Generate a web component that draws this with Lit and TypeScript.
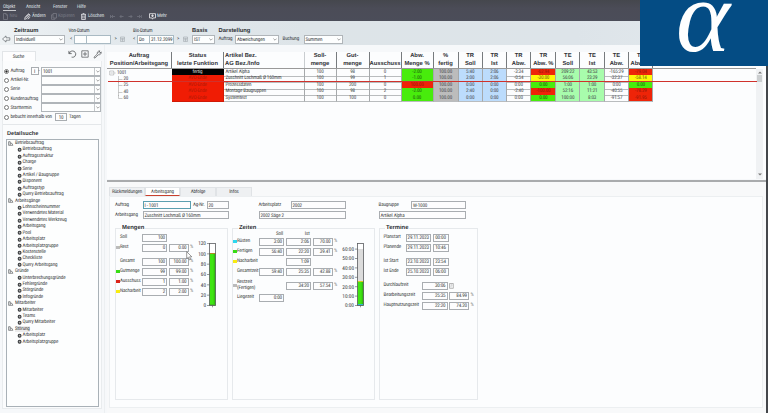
import { LitElement, html, svg, css, nothing } from "lit";
import { customElement, property } from "lit/decorators.js";
import { classMap } from "lit/directives/class-map.js";

const base = css`
  * { box-sizing: border-box; }
  .field {
    display: flex; align-items: center; height: 8px; flex: none;
    border: 1px solid #a9adb1; background: #fdfdfe; padding: 1px 1px 0;
    overflow: hidden; white-space: nowrap;
  }
  .field.num { justify-content: flex-end; }
  .field.mid { justify-content: center; }
  .field.focus { border-color: #5b9fb0; }
  b, h2, h3 { font-family: "Liberation Sans", Arial, sans-serif; font-stretch: normal; }
  svg { display: block; flex: none; }
`;

@customElement("combo-box")
class ComboBox extends LitElement {
  @property() value = "";
  static styles = [base, css`
    :host { display: flex; height: 9px; border: 1px solid #b0b5b9; background: #fdfefe; box-sizing: border-box; align-items: center; overflow: hidden; white-space: nowrap; }
    .text { flex: 1; padding: 1px 0 0 1px; }
    .arrow { width: 6px; height: 7px; display: flex; align-items: center; justify-content: center; }
    :host([boxed]) .arrow { border-left: 1px solid #c4c8cb; }
  `];
  render() {
    return html`<span class="text">${this.value}</span>
      <span class="arrow"><svg width="4" height="3" viewBox="0 0 4 3"><path d="M.4 .6 2 2.2 3.6 .6" fill="none" stroke="#666" stroke-width=".6"/></svg></span>`;
  }
}

@customElement("app-header")
class AppHeader extends LitElement {
  static styles = [base, css`
    :host { display: block; height: 21px; background: linear-gradient(#45474d, #4b4c57 40%, #4b4d59); color: #dfe0e3; }
    .menu { display: grid; grid-template-columns: 23px 27px 24px 20px; padding: 4px 0 0 3px; height: 12px; line-height: 6px; }
    .active { border-bottom: 1px solid #c9cacd; width: 13px; height: 7px; }
    .tools { display: grid; grid-template-columns: 6.5px 14.5px 8px 19px 7px 23px 7px 22px 9px 9px 9px 12px 8px 14px; padding-left: 3px; align-items: center; height: 8px; line-height: 8px; }
    .dim { color: #777983; }
  `];
  render() {
    const nav = (d: string) => svg`<path d=${d} fill="none" stroke="#71737d" stroke-width=".8"/>`;
    return html`
      <div class="menu"><span class="active">Objekt</span><span>Ansicht</span><span>Fenster</span><span>Hilfe</span></div>
      <div class="tools">
        <svg width="5" height="7" viewBox="0 0 5 7"><path d="M.5 .5h2.5l1.5 1.5v4.5h-4z M3 .5v1.5h1.5" fill="none" stroke="#777983" stroke-width=".8"/></svg><span class="dim">Neu</span>
        <svg width="7" height="7" viewBox="0 0 7 7"><path d="M.6 6.4 1.2 4 4.6 .8 6.2 2.2 2.8 5.6zM1.6 4 4.9 1.2M2.5 5 5.6 2M3.8 6.2 6.3 4" fill="none" stroke="#e4e5e8" stroke-width=".8"/></svg><span>Ändern</span>
        <svg width="6" height="7" viewBox="0 0 6 7"><path d="M2 .5h3.5v4.5H2zM2 1.8H.5v4.5H4V5" fill="none" stroke="#777983" stroke-width=".8"/></svg><span class="dim">Kopieren</span>
        <svg width="5" height="7" viewBox="0 0 5 7"><path d="M0 1.4h5M1.6 .5h1.8M.6 1.5v5h3.8v-5M1.8 2.5v3M3.2 2.5v3" fill="none" stroke="#e4e5e8" stroke-width=".8"/></svg><span>Löschen</span>
        <svg width="5" height="5" viewBox="0 0 5 5">${nav("M.5 1v3M5 2.5H1.5M3 1 1.5 2.5 3 4")}</svg>
        <svg width="5" height="5" viewBox="0 0 5 5">${nav("M4.5 2.5H1M2.4 1 1 2.5 2.4 4")}</svg>
        <svg width="5" height="5" viewBox="0 0 5 5">${nav("M.5 2.5H4M2.6 1 4 2.5 2.6 4")}</svg>
        <svg width="5" height="5" viewBox="0 0 5 5">${nav("M4.6 1v3M0 2.5h3.6M2 1 3.6 2.5 2 4")}</svg>
        <svg width="7" height="7" viewBox="0 0 7 7"><path d="M.5 .7h6v4.2H4.2L3.5 6.2 2.8 4.9H.5zM2 2.8h3M3.5 1.4v2.8" fill="none" stroke="#f0f0f2" stroke-width=".8"/></svg><span>Mehr</span>
      </div>`;
  }
}

@customElement("filter-bar")
class FilterBar extends LitElement {
  static styles = [base, css`
    :host { display: block; height: 24px; background: linear-gradient(90deg, #eef2f4 0, #e3e9ed 12%, #dde4e8 40%, #dde4e9 75%, #e4eaee); color: #33373b; }
    .heads, .inputs { display: grid; align-items: center; }
    .heads { grid-template-columns: 54.5px 64.5px 59px 26.5px 60px; padding: 6px 0 0 14px; height: 13.5px; line-height: 8px; }
    .heads b { font-size: 5.8px; letter-spacing: 0; color: #2b2e31; }
    .inputs { grid-template-columns: 14px 51px 5px 4px 37px 3.5px 5.5px 13px 4px 37px 3px 5.5px 9.5px 22.5px 4px 16.5px 43.5px 4px 21px 39px; height: 9px; }
    .date { display: grid; grid-template-columns: 11px 1fr; height: 9px; border: 1px solid #a9bac3; background: #fdfefe; line-height: 8px; }
    .date span { padding-left: 1px; }
    .date span + span { border-left: 1px solid #a9bac3; }
    .back { margin-left: 2px; }
  `];
  render() {
    const cal = html`<svg width="5" height="6" viewBox="0 0 5 6"><path d="M.5 1h4v4.5h-4zM.5 2.4h4M1 3.8h3M2.5 2.4v3" fill="none" stroke="#a3a9ae" stroke-width=".6"/></svg>`;
    const date = (a: string, b: string) => html`
      <span>&lt;</span><span class="date"><span>${a}</span><span>${b}</span></span><i></i><span>&gt;</span>${cal}`;
    return html`
      <div class="heads"><b>Zeitraum</b><span>Von-Datum</span><span>Bis-Datum</span><b>Basis</b><b>Darstellung</b></div>
      <div class="inputs">
        <svg class="back" width="9" height="8" viewBox="2 0 9 8"><path d="M2.5 4 6 .9v1.9h3.8v2.4H6v1.9z" fill="#f4f6f7" stroke="#62676b" stroke-width=".7"/></svg>
        <combo-box value="Individuell"></combo-box><i></i>
        ${date("", "")}
        ${date("Do", "31.12.2099")}
        <combo-box value="IST"></combo-box><i></i>
        <span>Auftrag</span><combo-box value="Abweichungen"></combo-box><i></i>
        <span>Buchung</span><combo-box value="Summen"></combo-box>
      </div>`;
  }
}

const tree: [string, string[]][] = [
  ["Betriebsauftrag", ["Betriebsauftrag", "Auftragsstruktur", "Charge", "Serie", "Artikel / Baugruppe", "Disponent", "Auftragstyp", "Query Betriebsauftrag"]],
  ["Arbeitsgänge", ["Lohnscheinnummer", "Verwendetes Material", "Verwendetes Werkzeug", "Arbeitsgang", "Pool", "Arbeitsplatz", "Arbeitsplatzgruppe", "Kostenstelle", "Checkliste", "Query Arbeitsgang"]],
  ["Gründe", ["Unterbrechungsgründe", "Fehlergründe", "Störgründe", "Infogründe"]],
  ["Mitarbeiter", ["Mitarbeiter", "Teams", "Query Mitarbeiter"]],
  ["Störung", ["Arbeitsplatz", "Arbeitsplatzgruppe"]],
];

@customElement("search-panel")
class SearchPanel extends LitElement {
  static styles = [base, css`
    :host { display: flex; flex-direction: column; width: 105px; flex: none; background: #f6f8fa; padding: 5px 2px 4px; border-right: 1px solid #eceff1; }
    .top { display: flex; height: 11px; }
    .tab { width: 34px; background: #fdfdfe; border: 1px solid #e2e5e8; border-bottom: none; display: flex; justify-content: center; align-items: center; margin-top: 1px; padding-right: 1px; }
    .icons { display: flex; gap: 4px; margin-left: 32px; }
    .body { flex: 1; background: #fbfcfd; border: 1px solid #e9ecee; border-top: none; display: flex; flex-direction: column; }
    .form { padding: 5.5px 1px 0; height: 64px; border-bottom: 1px solid #e4e7ea; }
    .row { display: grid; grid-template-columns: 6.5px 20px 8px 2.5px 60px; height: 9.2px; align-items: center; white-space: nowrap; }
    .row.plain { grid-template-columns: 6.5px 30.5px 60px; }
    .row.days { grid-template-columns: 6.5px 44.5px 12px 40px; }
    .row combo-box { height: 9px; }
    .radio { width: 5px; height: 5px; border: .7px solid #777; border-radius: 50%; display: flex; background: #fff; }
    .radio.on { background: radial-gradient(#222 42%, #fff 55%); }
    h2 { margin: 6px 0 0 4px; font-size: 5.6px; line-height: 7px; letter-spacing: 0; color: #303336; }
    .list { margin: 1px 2px 1px 3px; flex: 1; border: 1px solid #a9b1b7; background: #fdfefe; padding-left: 1px; }
    .node { height: 6.41px; display: grid; align-items: center; grid-template-columns: 7px auto; line-height: 6.4px; white-space: nowrap; }
    .leaf { padding-left: 9px; grid-template-columns: 5.6px auto; }
    .hl { background: #ececec; justify-self: start; }
    .days span:last-child { padding-left: 2px; }
  `];
  render() {
    const row = (l: string) => html`<div class="row plain"><span class="radio"></span><span>${l}</span><combo-box boxed></combo-box></div>`;
    return html`
      <div class="top">
        <div class="tab">Suche</div>
        <div class="icons">
          <svg width="9" height="8" viewBox="0 0 9 8"><path d="M.9 .9v2.7h2.8M1.1 3.3C2.2 1.2 4.2 .5 6 1.3 8 2.4 8.3 4.8 6.8 6.4 5.8 7.3 4.6 7.4 3.6 7.1" fill="none" stroke="#4d5053" stroke-width=".8"/></svg>
          <svg width="8" height="8" viewBox="0 0 8 8"><path d="M.8 .8h6.4v6.4H.8zM4 2v4M2 4h4" fill="none" stroke="#4d5053" stroke-width=".7"/></svg>
          <svg width="9" height="9" viewBox="0 0 9 9"><path d="M1 7.2 4.3 4C3.9 2.3 5 .7 7 .9L5.8 2.3l.9.9L8.2 1.9C8.5 3.8 7 5.1 5.2 4.8L2 8.1Q1 8.3 1 7.2z" fill="none" stroke="#4d5053" stroke-width=".7"/></svg>
        </div>
      </div>
      <div class="body">
        <div class="form">
          <div class="row"><span class="radio on"></span><span>Auftrag</span><span class="field mid">I</span><span>-</span><combo-box boxed value="1001"></combo-box></div>
          ${["Artikel-Nr.", "Serie", "Kundenauftrag", "Starttermin"].map(row)}
          <div class="row days"><span class="radio"></span><span>bebucht innerhalb von</span><span class="field mid">10</span><span>Tagen</span></div>
        </div>
        <h2>Detailsuche</h2>
        <div class="list">
          ${tree.map(([name, items]) => html`
            <div class="node"><svg width="6" height="5" viewBox="0 0 6 5"><path d="M.6 .7h1.6v3.6H.6zM2.2 4.3h2.7L4 2.4 2.2 2" fill="none" stroke="#4a4d50" stroke-width=".6"/></svg><span class=${classMap({ hl: name === "Störung" })}>${name}</span></div>
            ${items.map(i => html`<div class="node leaf"><svg width="5" height="5" viewBox="0 0 5 5"><circle cx="2.6" cy="2.7" r="1.4" fill="#aaa" stroke="#35383b" stroke-width="1.1"/></svg><span>${i}</span></div>`)}`)}
        </div>
      </div>`;
  }
}

const heads = [["Auftrag", "Position/Arbeitsgang"], ["Status", "letzte Funktion"], ["Artikel Bez.", "AG Bez./Info"], ["Soll-", "menge"], ["Gut-", "menge"], ["", "Ausschuss"], ["Abw.", "Menge %"], ["%", "fertig"], ["TR", "Soll"], ["TR", "Ist"], ["TR", "Abw."], ["TR", "Abw. %"], ["TE", "Soll"], ["TE", "Ist"], ["TE", "Abw."], ["TE", "Abw. %"]];
const rows = [
  ["1001", "fertig", "Artikel Alpha", "100", "98", "0", "g-2.00", "100.00", "5:40", "2:06", "-3:34", "r-62.94", "209:22", "43:53", "-165:29", "r-79.04"],
  ["20", "AVO-Ende", "Zuschnitt Lochmaß Ø 160mm", "100", "99", "1", "g-1.00", "100.00", "3:00", "2:06", "-0:54", "y-30.00", "56:06", "23:29", "-32:37", "y-58.14"],
  ["25", "AVO-Ende", "Prozessdaten", "100", "200", "0", "r100.00", "100.00", "0:00", "0:00", "0:00", "g0.00", "1:00", "1:00", "0:00", "g0.00"],
  ["40", "AVO-Ende", "Montage Baugruppen", "100", "98", "2", "g-2.00", "100.00", "2:40", "0:00", "-2:40", "r-100.00", "52:16", "11:21", "-40:55", "r-78.29"],
  ["60", "AVO-Ende", "Systemtest", "100", "100", "0", "g0.00", "100.00", "0:00", "0:00", "0:00", "g0.00", "100:00", "8:03", "-91:57", "r-91.95"],
];

@customElement("order-table")
class OrderTable extends LitElement {
  static styles = [base, css`
    :host { display: flex; height: 127px; margin-top: 7px; position: relative; background: #fcfdfe; }
    .grid { flex: 1; }
    .line { display: grid; grid-template-columns: 65px 52px 80.5px 32px 33px 32px 32px 25px 24.4px 24px 24.6px 24.7px 24.3px 24.4px 24.3px 24.3px; }
    .head { height: 17px; border-bottom: 1px solid #999; }
    .head > div { border-right: 1px solid #777b7e; font: bold 5.8px/8px "Liberation Sans", Arial, sans-serif; letter-spacing: 0; text-align: center; white-space: nowrap; color: #303236; }
    .head > .left { text-align: left; padding-left: 1px; border-right-color: #c9cdd0; }
    .head span { display: block; height: 8px; }
    .row { height: 6.4px; line-height: 6.8px; }
    .row > div { border-right: 1px solid #a6a9ab; border-bottom: 1px solid #b9bcbe; text-align: center; white-space: nowrap; color: #45484b; }
    .row > .pos { border-bottom: none; text-align: left; display: flex; align-items: center; padding-left: 2px; gap: 1px; border-right: none; }
    .row > .art { text-align: left; padding-left: 1.5px; color: #3b3e42; }
    .row > .black { background: #020202; color: #ddd; border-color: #020202; }
    .row > .ende { background: #f01c04; color: #b41a06; border-color: #d01a06; }
    .row > .g { background: #48ec0c; color: #1c6010; }
    .row > .r { background: #ee2408; color: #96180a; }
    .row > .y { background: #fdf608; color: #6a6410; }
    .row > .gray { background: #bcbcbc; }
    .row > .blue { background: #bcdcfc; }
    .row > .mint { background: #a8fcac; }
    .marker { position: absolute; left: 1px; right: 9px; top: 29px; height: 1px; background: #d0322c; }
    .bar { width: 7px; margin: 17px 3px 0 0; background: #f0f2f4; display: flex; flex-direction: column; align-items: center; padding: 2px 0 3px; }
    .thumb { width: 5px; height: 7px; background: #cbced0; margin-top: 1px; }
    .down { margin-top: auto; }
  `];
  render() {
    const tint = (c: number) => ({ gray: c === 7, blue: c === 8 || c === 9, mint: c === 12 || c === 13 });
    return html`
      <div class="grid">
        <div class="line head">${heads.map((h, i) => html`<div class=${classMap({ left: i === 2 })}><span>${h[0]}</span><span>${h[1]}</span></div>`)}</div>
        ${rows.map((r, ri) => html`<div class="line row">${r.map((v, c) => {
          if (c === 0) return html`<div class="pos">${ri === 0
            ? html`<svg width="7" height="6" viewBox="0 0 7 6"><path d="M.7 1h4v4h-4zM1.6 3h2.2M5 3h1.6" fill="none" stroke="#999" stroke-width=".5"/></svg>`
            : html`<svg width="13.5" height="7" viewBox="0 0 13.5 7"><path d=${ri === 4 ? "M9.5 0V3.5H13.5" : "M9.5 0V7M9.5 3.5H13.5"} fill="none" stroke="#999" stroke-width=".5"/></svg>`}<span>${v}</span></div>`;
          if (c === 1) return html`<div class=${ri ? "ende" : "black"}>${v}</div>`;
          if (c === 2) return html`<div class="art">${v}</div>`;
          const k = /^[gry]/.test(v) ? v[0] : "";
          return html`<div class=${classMap({ ...tint(c), ...(k ? { [k]: true } : {}) })}>${k ? v.slice(1) : v}</div>`;
        })}</div>`)}
      </div>
      <div class="bar">
        <svg width="4" height="3" viewBox="0 0 4 3"><path d="M0 2.5 2 .5 4 2.5z" fill="#777"/></svg><div class="thumb"></div>
        <svg class="down" width="4" height="3" viewBox="0 0 4 3"><path d="M0 .5 2 2.5 4 .5z" fill="#777"/></svg>
      </div>
      <div class="marker"></div>`;
  }
}

@customElement("level-gauge")
class LevelGauge extends LitElement {
  @property({ attribute: false }) labels: string[] = [];
  @property({ type: Number }) step = 10.3;
  @property({ type: Number }) fill = 0;
  @property({ type: Number }) back = 0;
  @property() cap = "#b08a20";
  @property() foot = "#40c020";
  static styles = [base, css`
    :host { display: block; }
    text { font-size: 5.3px; letter-spacing: 0; fill: #333639; }
  `];
  render() {
    return html`<svg width="32" height="72" viewBox="0 0 32 72">
      <rect x="22.5" y="4.5" width="6" height="62" fill="#fff"/>
      <rect x="22.5" y=${66.5 - this.back} width="6" height=${this.back} fill="#dcdcdc"/>
      <rect x="22.5" y=${66.5 - this.fill} width="6" height=${this.fill} fill="#3fe512"/>
      <rect x="26.7" y=${66.5 - this.fill} width="1.8" height=${this.fill} fill="#33c010"/>
      <rect x="22.5" y=${66 - this.fill} width="6" height="1" fill=${this.cap}/>
      <rect x="22.5" y="65" width="6" height="1.3" fill=${this.foot}/>
      <rect x="22.5" y="4.5" width="6" height="62" fill="none" stroke="#5a5d60" stroke-width=".8"/>
      <path d="M25.5 66.5v1.8" stroke="#555" stroke-width=".6"/>
      ${this.labels.map((l, i) => svg`<path d="M20 ${66.5 - i * this.step}h2.5" stroke="#555" stroke-width=".6"/><text x="19" y=${68.3 - i * this.step} text-anchor="end">${l}</text>`)}
    </svg>`;
  }
}

@customElement("detail-view")
class DetailView extends LitElement {
  static styles = [base, css`
    :host { display: block; flex: 1; padding: 5px 3px 0 2px; background: #f8f9fa; }
    .tabs { display: grid; grid-template-columns: 36px 35px 36px 36px; height: 9px; }
    .tab { background: #eef0f2; border: 1px solid #e0e3e6; border-bottom: none; display: flex; align-items: center; justify-content: center; }
    .tab.on { background: #fff; border-bottom: 1px solid #c8402e; }
    .page { background: #fcfdfe; border: 1px solid #eceff1; height: 212px; padding: 4px 0 0 5px; }
    .info { display: grid; grid-template-columns: 27.5px 48px 2.5px 13.5px 22px 30px 32px 55.5px 32.5px 32.5px 55px; row-gap: 2px; align-items: center; height: 18px; white-space: nowrap; }
    .s4 { grid-column: span 4; } .s2 { grid-column: span 2; }
    .groups { display: flex; margin-top: 8.5px; gap: 4px; height: 175px; }
    .group { border: 1px solid #e6e9ec; display: flex; width: 113px; height: 172px; position: relative; flex: none; }
    .zeiten { width: 143px; } .termine { width: 99px; }
    h3 { position: absolute; top: -4px; left: 5px; margin: 0; padding: 0 1px; background: #fcfdfe; font-size: 5.9px; line-height: 7px; letter-spacing: 0; color: #2f3235; }
    .rows { padding-top: 4px; flex: none; }
    .zeiten .rows { padding-top: 3px; }
    .row { display: flex; height: 10px; align-items: center; gap: 1.5px; white-space: nowrap; }
    .gap { margin-top: 4px; }
    .label { width: 24px; display: flex; align-items: center; line-height: 5.5px; }
    .sq { width: 3.5px; height: 3.5px; margin-right: .5px; flex: none; }
    .pc { color: #888; width: 4px; padding-bottom: 2px; }
    .heads { height: 5px; display: grid; grid-template-columns: 25.5px 26.5px; padding-left: 24.5px; text-align: right; line-height: 5px; }
    .spacer { height: 2px; }
    .m1 { width: 25.5px; } .m2 { width: 20px; } .m3 { width: 16px; }
    .termine .rows { padding-left: 3.5px; }
    .termine .label { width: 20.5px; }
    .termine .long { width: 37px; }
    .cyan { background: #2cd8f0; } .green { background: #38dc14; } .yellow { background: #f8ec10; } .red { background: #dc2418; } .silver { background: #bbb; }
    .rows + level-gauge { margin: 10px 0 0 -7px; }
    .zeiten .rows + level-gauge { margin-left: -3px; }
  `];
  render() {
    const sq = (c: string) => html`<span class="sq ${c}"></span>`;
    const m = (label: string, c: string, a: string, b?: string, gap = false) => html`
      <div class="row ${gap ? "gap" : ""}"><span class="label">${sq(c)}${label}</span><span class="field num m1">${a}</span>
      ${b === undefined ? nothing : html`<span class="field num m2">${b}</span><span class="pc">%</span>`}</div>`;
    const z = (label: unknown, c: string, a: string, b: string, p: string, gap = false) => html`
      <div class="row ${gap ? "gap" : ""}"><span class="label">${sq(c)}<span>${label}</span></span>
      ${a ? html`<span class="field num m1">${a}</span>` : html`<span class="m1"></span>`}
      ${b ? html`<span class="field num m1">${b}</span>` : nothing}
      ${p ? html`<span class="field num m2">${p}</span><span class="pc">%</span>` : nothing}</div>`;
    const t = (label: string, d: string, h: string, gap = false) => html`
      <div class="row ${gap ? "gap" : ""}"><span class="label">${label}</span><span class="field mid m1">${d}</span><span class="field mid m3">${h}</span></div>`;
    return html`
      <div class="tabs"><div class="tab">Rückmeldungen</div><div class="tab on">Arbeitsgang</div><div class="tab">Abfolge</div><div class="tab">Infos</div></div>
      <div class="page">
        <div class="info">
          <span>Auftrag</span><span class="field focus">I&nbsp;- 1001</span><i></i><span>Ag-Nr.</span><span class="field">20</span><i></i>
          <span>Arbeitsplatz</span><span class="field">2002</span><i></i><span>Baugruppe</span><span class="field">W-1000</span>
          <span>Arbeitsgang</span><span class="field s4">Zuschnitt Lochmaß Ø 160mm</span><i></i>
          <span class="field s2">2002 Säge 2</span><i></i><span class="field s2">Artikel Alpha</span>
        </div>
        <div class="groups">
          <div class="group"><h3>Mengen</h3>
            <div class="rows">
              ${m("Soll", "none", "100")}${m("Rest", "silver", "0", "0.00")}
              ${m("Gesamt", "none", "100", "100.00", true)}${m("Gutmenge", "green", "99", "99.00")}
              ${m("Ausschuss", "red", "1", "1.00")}${m("Nacharbeit", "yellow", "2", "2.00")}
            </div>
            <level-gauge .labels=${["0", "20", "40", "60", "80", "100", "120"]} step="10.33" fill="52"></level-gauge>
          </div>
          <div class="group zeiten"><h3>Zeiten</h3>
            <div class="rows">
              <div class="heads"><span>Soll</span><span>Ist</span></div>
              ${z("Rüsten", "cyan", "3:00", "2:06", "70.00")}${z("Fertigen", "green", "56:40", "22:20", "39.41")}
              ${z("Nacharbeit", "yellow", "", "1:09", "")}${z("Gesamtzeit", "none", "59:40", "25:35", "42.88")}
              ${z(html`Restzeit<br>(Fertigen)`, "silver", "", "34:20", "57.54", true)}
              <div class="spacer"></div>${z("Liegezeit", "none", "0:00", "", "")}
            </div>
            <level-gauge .labels=${["0:00", "10:00", "20:00", "30:00", "40:00", "50:00", "60:00"]} step="9.4" fill="24" back="56.5" cap="#d8c820" foot="#30b8d0"></level-gauge>
          </div>
          <div class="group termine"><h3>Termine</h3>
            <div class="rows">
              ${t("Planstart", "29.11.2023", "00:00")}${t("Planende", "29.11.2023", "10:46")}
              ${t("Ist Start", "23.10.2023", "23:54", true)}${t("Ist Ende", "25.10.2023", "06:00")}
              <div class="row gap"><span class="label long">Durchlaufzeit</span><span class="field num m1">30:06</span><svg width="5" height="6" viewBox="0 0 5 6"><path d="M.5 .5h3.8v4.8H.5zM1.5 2h1.8M1.5 3.8h1" fill="none" stroke="#888" stroke-width=".6"/></svg></div>
              <div class="row"><span class="label long">Bearbeitungszeit</span><span class="field num m1">25:35</span><span class="field num m2">84.99</span><span class="pc">%</span></div>
              <div class="row"><span class="label long">Hauptnutzungszeit</span><span class="field num m1">22:20</span><span class="field num m2">74.20</span><span class="pc">%</span></div>
            </div>
          </div>
        </div>
      </div>`;
  }
}

@customElement("app-root")
class AppRoot extends LitElement {
  static styles = [base, css`
    :host { display: flex; flex-direction: column; width: 768px; height: 413px; position: relative; overflow: hidden; background: #f6f8fa; font-family: Roboto, "Liberation Sans", Arial, sans-serif; font-stretch: 75%; font-size: 5.1px; letter-spacing: -.14px; line-height: 6px; color: #3a3d40; text-rendering: geometricPrecision; }
    .body { flex: 1; display: flex; min-height: 0; border-right: 2px solid #44474b; }
    .main { flex: 1; min-width: 0; display: flex; flex-direction: column; padding-left: 2px; }
    .split { height: 2px; background: #a9abad; margin-top: 1px; }
    .logo { position: absolute; right: 0; top: 0; width: 128px; height: 66px; background: #044c84; }
    .logo text { font: italic 103px "Liberation Serif", serif; letter-spacing: 0; fill: #fff; }
    .cursor { position: absolute; left: 186px; top: 251px; }
  `];
  render() {
    return html`
      <app-header></app-header>
      <filter-bar></filter-bar>
      <div class="body">
        <search-panel></search-panel>
        <div class="main"><order-table></order-table><div class="split"></div><detail-view></detail-view></div>
      </div>
      <div class="logo"><svg width="128" height="66" viewBox="0 0 128 66"><text x="36" y="51">α</text></svg></div>
      <svg class="cursor" width="7" height="10" viewBox="0 0 7 10"><path d="M.7 .7v7l1.6-1.4 1.1 2.6 1.2-.5-1-2.6h2.2z" fill="#fff" stroke="#555" stroke-width=".6"/></svg>`;
  }
}
